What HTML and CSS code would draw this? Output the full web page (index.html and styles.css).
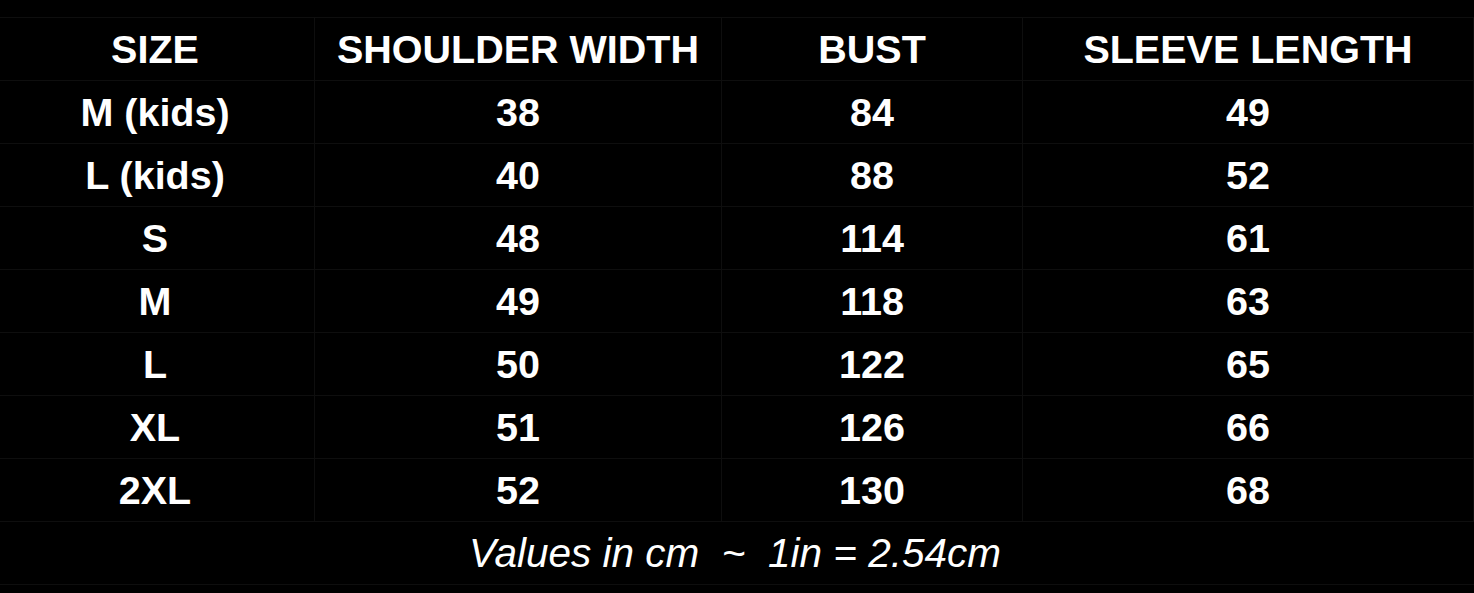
FILE: index.html
```html
<!DOCTYPE html>
<html lang="en">
<head>
<meta charset="utf-8">
<title>Size chart</title>
<link rel="stylesheet" href="styles.css">
</head>
<body>
<div class="chart">
  <div class="grid">
    <div class="cell head first">SIZE</div>
    <div class="cell head">SHOULDER WIDTH</div>
    <div class="cell head">BUST</div>
    <div class="cell head">SLEEVE LENGTH</div>

    <div class="cell first">M (kids)</div><div class="cell">38</div><div class="cell">84</div><div class="cell">49</div>
    <div class="cell first">L (kids)</div><div class="cell">40</div><div class="cell">88</div><div class="cell">52</div>
    <div class="cell first">S</div><div class="cell">48</div><div class="cell">114</div><div class="cell">61</div>
    <div class="cell first">M</div><div class="cell">49</div><div class="cell">118</div><div class="cell">63</div>
    <div class="cell first">L</div><div class="cell">50</div><div class="cell">122</div><div class="cell">65</div>
    <div class="cell first">XL</div><div class="cell">51</div><div class="cell">126</div><div class="cell">66</div>
    <div class="cell first">2XL</div><div class="cell">52</div><div class="cell">130</div><div class="cell">68</div>

    <div class="cell note">Values in cm  ~  1in = 2.54cm</div>
  </div>
</div>
</body>
</html>
```
FILE: styles.css
```css
html, body {
  margin: 0;
  padding: 0;
  background: #000;
}
body {
  width: 1474px;
  height: 593px;
  overflow: hidden;
  font-family: "Liberation Sans", Arial, sans-serif;
  color: #fff;
}
.chart {
  padding-top: 17px;
}
.grid {
  display: grid;
  grid-template-columns: 315px 407px 301px 1fr;
  grid-auto-rows: 63px;
  border-top: 1px solid #0e0e0e;
}
.cell {
  display: flex;
  align-items: center;
  justify-content: center;
  border-right: 1px solid #0e0e0e;
  border-bottom: 1px solid #0e0e0e;
  font-weight: bold;
  font-size: 39.5px;
  line-height: 1;
  padding-top: 1px;
}
.cell.first {
  padding-right: 4px;
}
.note {
  grid-column: 1 / -1;
  font-weight: normal;
  font-style: italic;
  font-size: 40.5px;
  white-space: pre;
  border-right: none;
  padding-right: 4px;
}
```
